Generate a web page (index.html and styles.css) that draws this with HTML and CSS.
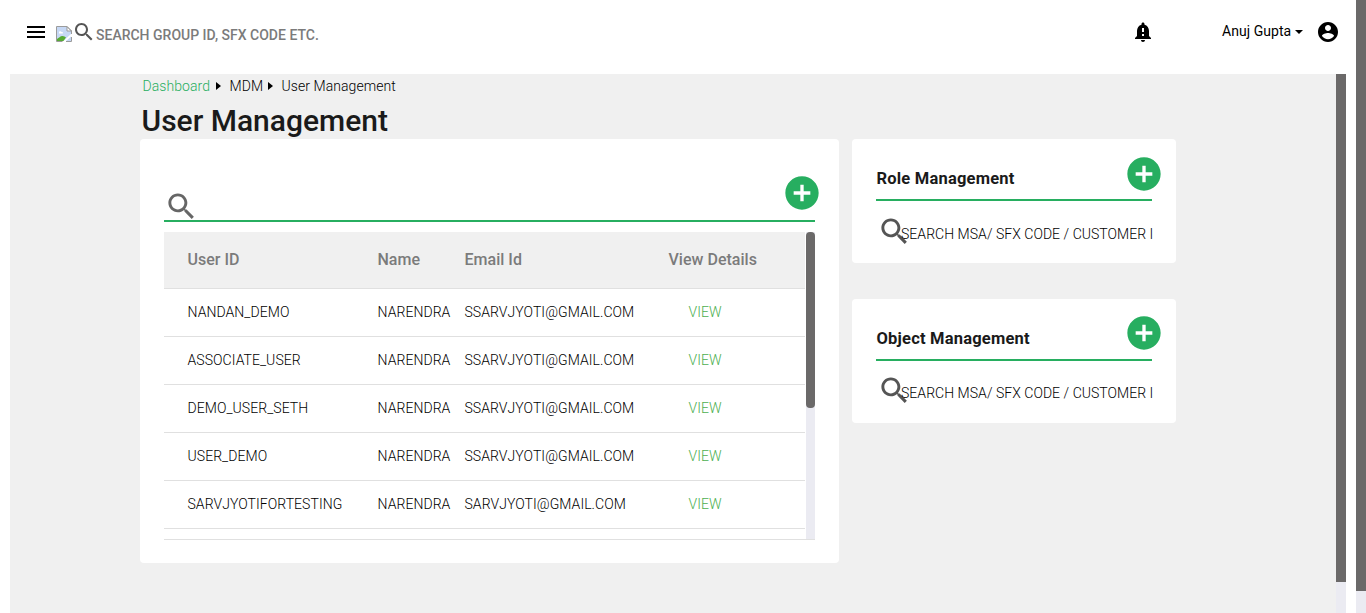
FILE: index.html
```html
<!DOCTYPE html>
<html lang="en">
<head>
<meta charset="utf-8">
<title>User Management</title>
<link rel="stylesheet" href="styles.css">
</head>
<body>
<svg class="defs" width="0" height="0" aria-hidden="true">
  <symbol id="search" viewBox="0 0 24 24"><path d="M15.5 14h-.79l-.28-.27C15.41 12.59 16 11.11 16 9.5 16 5.91 13.09 3 9.5 3S3 5.91 3 9.5 5.91 16 9.5 16c1.61 0 3.09-.59 4.23-1.57l.27.28v.79l5 4.99L20.49 19l-4.99-5zm-6 0C7.01 14 5 11.99 5 9.5S7.01 5 9.5 5 14 7.01 14 9.5 11.99 14 9.5 14z"/></symbol>
  <symbol id="add" viewBox="0 0 24 24"><path d="M12 2C6.48 2 2 6.48 2 12s4.48 10 10 10 10-4.48 10-10S17.52 2 12 2zm5 11h-4v4h-2v-4H7v-2h4V7h2v4h4v2z"/></symbol>
</svg>
<div class="page">
  <header class="topbar">
    <svg class="icon menu" viewBox="0 0 24 24"><path d="M3 18h18v-2H3v2zm0-5h18v-2H3v2zm0-7v2h18V6H3z"/></svg>
    <svg class="broken" viewBox="0 0 16 16">
      <path fill="#c6d8f5" d="M1 1h10l4 4v10H1z"/>
      <path fill="#fff" d="M3 6.500c0-1.500 2-1.500 2.500-.5C7 5.500 7.500 7 6.500 7.500H3z"/>
      <path fill="#56ab34" d="M1 15v-2c2-1 3-3 5.500-3 1.500 0 2.500 1 3.500 1.500L7.500 15z"/>
      <path fill="#fff" d="M16 7v2.500L9 16H6.500z"/>
      <path fill="#fff" stroke="#9b9b9b" d="M11 .5V5h4.500z"/>
      <path fill="none" stroke="#9b9b9b" d="M6.500 15.500h-6V.5H11L15.500 5v3M10 15.500h5.500V11"/>
    </svg>
    <svg class="icon top-search"><use href="#search"/></svg>
    <span class="top-placeholder">SEARCH GROUP ID, SFX CODE ETC.</span>
    <svg class="icon bell" viewBox="0 0 24 24"><path d="M18 16v-5c0-3.070-1.640-5.640-4.500-6.320V4c0-.83-.67-1.500-1.500-1.500s-1.500.67-1.500 1.500v.68C7.630 5.360 6 7.920 6 11v5l-2 2v1h16v-1l-2-2zm-5 0h-2v-2h2v2zm0-4h-2V8h2v4zm-1 10c1.100 0 2-.9 2-2h-4c0 1.100.89 2 2 2z"/></svg>
    <span class="user">Anuj Gupta</span><i class="caret"></i>
    <svg class="icon account" viewBox="0 0 24 24"><path d="M12 2C6.480 2 2 6.480 2 12s4.480 10 10 10 10-4.480 10-10S17.520 2 12 2zm0 3c1.660 0 3 1.340 3 3s-1.340 3-3 3-3-1.340-3-3 1.340-3 3-3zm0 14.200c-2.500 0-4.710-1.280-6-3.220.03-1.990 4-3.080 6-3.080 1.990 0 5.970 1.090 6 3.080-1.290 1.940-3.500 3.220-6 3.220z"/></svg>
  </header>
  <div class="workspace">
    <main class="content">
      <nav class="crumbs"><a class="home">Dashboard</a><i class="arrow"></i><span class="mdm">MDM</span><i class="arrow"></i><span class="here">User Management</span></nav>
      <h1 class="title">User Management</h1>
      <div class="columns">
        <section class="card users">
          <div class="users-search"><svg class="icon-lg"><use href="#search"/></svg></div>
          <svg class="add"><use href="#add"/></svg>
          <div class="table-box">
            <div class="table">
              <div class="row head"><span>User ID</span><span>Name</span><span>Email Id</span><span>View Details</span></div>
              <div class="row"><span>NANDAN_DEMO</span><span>NARENDRA</span><span>SSARVJYOTI@GMAIL.COM</span><a>VIEW</a></div>
              <div class="row"><span>ASSOCIATE_USER</span><span>NARENDRA</span><span>SSARVJYOTI@GMAIL.COM</span><a>VIEW</a></div>
              <div class="row"><span>DEMO_USER_SETH</span><span>NARENDRA</span><span>SSARVJYOTI@GMAIL.COM</span><a>VIEW</a></div>
              <div class="row"><span>USER_DEMO</span><span>NARENDRA</span><span>SSARVJYOTI@GMAIL.COM</span><a>VIEW</a></div>
              <div class="row"><span>SARVJYOTIFORTESTING</span><span>NARENDRA</span><span>SARVJYOTI@GMAIL.COM</span><a>VIEW</a></div>
            </div>
            <div class="track table-track"><div class="thumb"></div></div>
          </div>
        </section>
        <div class="side">
          <section class="card panel">
            <h2 class="panel-title">Role Management</h2>
            <svg class="add"><use href="#add"/></svg>
            <div class="panel-search"><svg class="icon-lg"><use href="#search"/></svg><div class="field">SEARCH MSA/ SFX CODE / CUSTOMER I</div></div>
          </section>
          <section class="card panel object">
            <h2 class="panel-title">Object Management</h2>
            <svg class="add"><use href="#add"/></svg>
            <div class="panel-search"><svg class="icon-lg"><use href="#search"/></svg><div class="field">SEARCH MSA/ SFX CODE / CUSTOMER I</div></div>
          </section>
        </div>
      </div>
    </main>
    <div class="track work-track"><div class="thumb"></div></div>
  </div>
</div>
<div class="track page-track"><div class="thumb"></div></div>
</body>
</html>
```
FILE: styles.css
```css
* { box-sizing: border-box; }
body {
  margin: 0; height: 613px; overflow: hidden; display: flex; background: #fff;
  font: 300 14px/20px Roboto, sans-serif; color: #000;
}
svg { display: block; flex: none; }
.defs { display: none; }
.page { width: 1356px; display: flex; flex-direction: column; }
.track { background: #ebebf2; width: 10px; flex: none; }
.thumb { background: #6b6969; }
.page-track .thumb { height: 591px; }

.topbar { height: 74px; flex: none; display: flex; align-items: flex-start; padding: 20px 16px 0 24px; color: #000; }
.icon { width: 24px; height: 24px; fill: #000; }
.broken { width: 16px; height: 16px; margin: 6px 0 0 8px; }
.top-search { fill: #555; }
.top-placeholder { font-weight: 500; color: #7b7b7b; margin-top: 5px; white-space: nowrap; }
.bell { margin-left: auto; }
.user { font-weight: 400; margin: 1px 0 0 67px; width: 70px; white-space: nowrap; letter-spacing: .05px; }
.caret { border: 4px solid transparent; border-top-color: #000; border-bottom: 0; margin: 10px 13px 0 3px; }

.workspace { flex: 1; margin: 0 10px; background: #f0f0f0; display: flex; }
.work-track .thumb { height: 508px; }
.content { flex: 1; padding: 2px 0 0 130px; }
.crumbs { display: flex; align-items: center; height: 20px; padding-left: 2.500px; white-space: nowrap; letter-spacing: .07px; }
.home { color: #27ae60; width: 69px; }
.mdm { width: 35px; }
.arrow { border: 4px solid transparent; border-left: 5px solid #000; border-right: 0; margin: 0 9px 0 4px; }
.mdm + .arrow { margin-left: 3px; }
.title { margin: 5px 0 0 1.500px; height: 38px; font-size: 30px; line-height: 40px; font-weight: 500; letter-spacing: 0; color: #1a1a1a; }
.columns { display: flex; gap: 13px; align-items: flex-start; }
.card { background: #fff; border-radius: 4px; position: relative; }

.users { width: 699px; height: 424px; padding: 50px 24px 0; }
.users-search { height: 33px; border-bottom: 2px solid #27ae60; }
.icon-lg { width: 35px; height: 35px; fill: #555; }
.users .icon-lg { margin-left: -.5px; fill: #666; }
.add { position: absolute; width: 40px; height: 40px; fill: #27ae60; right: 17px; top: 34px; }
.table-box { margin-top: 10px; height: 308px; display: flex; justify-content: space-between; border-bottom: 1px solid #e0e0e0; }
.table { width: 641px; }
.table-track { width: 9px; }
.table-track .thumb { height: 176px; border-radius: 4px; }
.row {
  display: grid; grid-template-columns: 190px 87px 224px 1fr; align-items: center;
  height: 48px; padding: 0 0 1px 23.500px; border-bottom: 1px solid #e0e0e0; white-space: nowrap;
  letter-spacing: .06px;
}
.row a { color: #4caf50; }
.head { height: 57px; padding-bottom: 0; background: #f0f0f0; font-size: 16px; font-weight: 500; color: #7b7b7b; letter-spacing: .02px; }
.head span:last-child { margin-left: -20px; }

.side { width: 324px; display: flex; flex-direction: column; gap: 36px; }
.panel { height: 124px; padding: 29px 24px 0; }
.panel-title { margin: 0; padding-left: .5px; height: 33px; border-bottom: 2px solid #27ae60; font-size: 16.500px; line-height: 22px; font-weight: 700; letter-spacing: .2px; color: #1a1a1a; }
.panel .add { top: 15px; right: 12.500px; }
.panel-search { display: flex; padding: 13px 0 0 .5px; }
.panel-search .icon-lg { margin-right: -10.500px; }
.field { width: 252px; margin-top: 10px; height: 20px; white-space: nowrap; letter-spacing: .04px; }
.object .add { top: 14px; }
.object .panel-search { padding-top: 12px; }
```
